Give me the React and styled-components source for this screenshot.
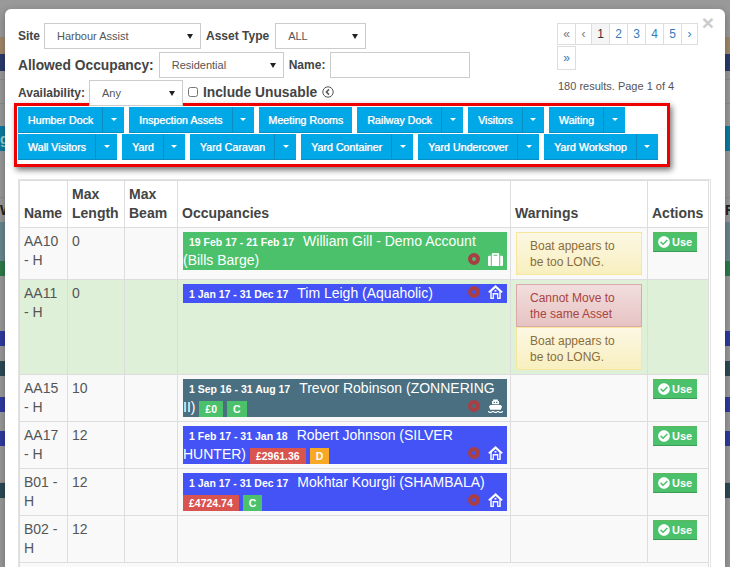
import React from 'react';
import styled, { createGlobalStyle } from 'styled-components';
import { FaCheckCircle, FaSuitcase } from 'react-icons/fa';

const arrow = "data:image/svg+xml,%3Csvg xmlns='http://www.w3.org/2000/svg' width='6' height='5'%3E%3Cpath d='M0 0h6L3 5z' fill='%23222'/%3E%3C/svg%3E";

const GlobalStyle = createGlobalStyle`
  html, body {
    margin: 0;
    height: 567px;
    overflow: hidden;
    background: #999;
    font-family: "Liberation Sans", Arial, sans-serif;
    font-size: 14px;
    color: #555;
  }
`;

const backdropStrips = [
  { h: 37, c: 'transparent' },
  { h: 17, c: '#a0876a' },
  { h: 17, c: '#2a3a6b' },
  { h: 9, c: 'transparent', line: true },
  { h: 24, c: 'transparent', line: true },
  { h: 22, c: 'transparent' },
  { h: 25, c: '#0b7ba0', left: 'g' },
  { h: 47, c: 'transparent', line: true },
  { h: 24, c: 'transparent', left: 'W', right: 'Fr', dark: true },
  { h: 39, c: '#6a878f' },
  { h: 15, c: '#2d7a4a' },
  { h: 55, c: 'transparent' },
  { h: 15, c: '#2f3a9e' },
  { h: 15, c: 'transparent' },
  { h: 15, c: '#2c4a55' },
  { h: 21, c: 'transparent' },
  { h: 15, c: '#2f3a9e' },
  { h: 19, c: 'transparent' },
  { h: 15, c: '#2f3a9e' },
  { h: 37, c: 'transparent', line: true },
  { h: 15, c: '#2c4a55' },
];

const menus = [
  ['Humber Dock', true], ['Inspection Assets', true], ['Meeting Rooms', false], ['Railway Dock', true], ['Visitors', true], ['Waiting', true],
  ['Wall Visitors', true], ['Yard', true], ['Yard Caravan', true], ['Yard Container', true], ['Yard Undercover', true], ['Yard Workshop', true],
];

function HomeIcon() {
  return (
    <svg width="16" height="16" viewBox="0 0 16 16">
      <path d="M8 .6L15.8 7.8 14.6 9 13.6 8.1V15.4H9.7V10.6H6.3V15.4H2.4V8.1L1.4 9 .2 7.8z" fill="#fff" />
      <path d="M8 3.6L12 7.3V14H11V9H5V14H4V7.3z" fill="var(--bar)" />
      <rect x="7" y="5.8" width="2" height="1.8" fill="#fff" />
    </svg>
  );
}

function ShipIcon() {
  return (
    <svg width="16" height="15" viewBox="0 0 16 15">
      <path d="M5.5 0h5v1.6h1.2V5H4.3V1.6h1.2z" fill="#fff" />
      <path d="M6 2.4h1.4v1.4H6zM8.6 2.4H10v1.4H8.6z" fill="var(--bar)" />
      <path d="M2.6 5.8h10.8L15 7.4 13.6 11H2.4L1 7.4z" fill="#fff" />
      <path d="M0 12.2c1.3 0 1.3.8 2.7.8s1.3-.8 2.6-.8 1.3.8 2.7.8 1.3-.8 2.7-.8 1.3.8 2.6.8 1.4-.8 2.7-.8v1.3c-1.3 0-1.3.8-2.7.8s-1.3-.8-2.6-.8-1.3.8-2.7.8-1.3-.8-2.7-.8-1.3.8-2.6.8-1.4-.8-2.7-.8z" fill="#fff" />
    </svg>
  );
}

function BackIcon() {
  return (
    <svg width="12" height="12" viewBox="0 0 12 12">
      <circle cx="6" cy="6" r="5.2" fill="none" stroke="#555" strokeWidth="1" />
      <path d="M7 3.4L4.4 6 7 8.6" fill="none" stroke="#555" strokeWidth="1.5" />
    </svg>
  );
}

function Occupancy({ color, dates, name, badges, icon }) {
  return (
    <Bar $color={color}>
      <Dates>{dates}</Dates>
      {name}{' '}
      {badges && badges.map(b => <Badge key={b.text} $color={b.color}>{b.text}</Badge>)}
      <BarIcons>
        <Ring />
        <IconBox>{icon}</IconBox>
      </BarIcons>
    </Bar>
  );
}

function UseButton() {
  return <UseBtn><FaCheckCircle size={12} />Use</UseBtn>;
}

const GREEN = '#4bc16b';
const BLUE = '#4353f5';
const TEAL = '#4a6f80';

export default function App() {
  return (
    <>
      <GlobalStyle />
      <Backdrop>
        {backdropStrips.map((s, i) => (
          <Strip key={i} $h={s.h} $c={s.c} $line={s.line} $dark={s.dark}>
            <span>{s.left}</span>
            <span>{s.right}</span>
          </Strip>
        ))}
      </Backdrop>
      <Modal>
        <Close>×</Close>
        <Top>
          <Filters>
            <FilterRow>
              <Label>Site</Label>
              <Select $w={157}><option>Harbour Assist</option></Select>
              <Label $after={1}>Asset Type</Label>
              <Select $w={91}><option>ALL</option></Select>
            </FilterRow>
            <FilterRow $top={3}>
              <BigLabel>Allowed Occupancy:</BigLabel>
              <Select $w={125}><option>Residential</option></Select>
              <Label $after={0}>Name:</Label>
              <NameInput />
            </FilterRow>
            <FilterRow $top={2}>
              <Label>Availability:</Label>
              <Select $w={94}><option>Any</option></Select>
              <IncludeGroup>
                <Check type="checkbox" />
                <BigLabel>Include Unusable</BigLabel>
                <BackIcon />
              </IncludeGroup>
            </FilterRow>
          </Filters>
          <PagerCol>
            <Pager>
              <PageItem $muted>«</PageItem>
              <PageItem $muted $narrow>‹</PageItem>
              <PageItem $active>1</PageItem>
              <PageItem>2</PageItem>
              <PageItem>3</PageItem>
              <PageItem>4</PageItem>
              <PageItem>5</PageItem>
              <PageItem $narrow>›</PageItem>
              <PageItem $tall>»</PageItem>
            </Pager>
            <Results>180 results. Page 1 of 4</Results>
          </PagerCol>
        </Top>

        <MenuBox>
          {menus.map(([label, caret]) => (
            <Group key={label}>
              <MenuBtn>{label}</MenuBtn>
              {caret && <CaretBtn><Caret /></CaretBtn>}
            </Group>
          ))}
        </MenuBox>

        <TableWrap>
          <Table>
            <colgroup>
              <col width="48" />
              <col width="57" />
              <col width="53" />
              <col width="333" />
              <col width="137" />
              <col width="61" />
            </colgroup>
            <thead>
              <tr>
                <Th>Name</Th>
                <Th>Max Length</Th>
                <Th>Max Beam</Th>
                <Th>Occupancies</Th>
                <Th>Warnings</Th>
                <Th>Actions</Th>
              </tr>
            </thead>
            <tbody>
              <Row>
                <Td>AA10 - H</Td>
                <Td>0</Td>
                <Td />
                <Td>
                  <Occupancy color={GREEN} dates="19 Feb 17 - 21 Feb 17" name="William Gill - Demo Account (Bills Barge)" icon={<FaSuitcase size={15} color="#fff" />} />
                </Td>
                <Td><Alert>Boat appears to be too LONG.</Alert></Td>
                <Td><UseButton /></Td>
              </Row>
              <Row $success>
                <Td>AA11 - H</Td>
                <Td>0</Td>
                <Td />
                <Td>
                  <Occupancy color={BLUE} dates="1 Jan 17 - 31 Dec 17" name="Tim Leigh (Aquaholic)" icon={<HomeIcon />} />
                </Td>
                <Td>
                  <Alert $danger>Cannot Move to the same Asset</Alert>
                  <Alert>Boat appears to be too LONG.</Alert>
                </Td>
                <Td />
              </Row>
              <Row>
                <Td>AA15 - H</Td>
                <Td>10</Td>
                <Td />
                <Td>
                  <Occupancy color={TEAL} dates="1 Sep 16 - 31 Aug 17" name="Trevor Robinson (ZONNERING II)" badges={[{ text: '£0', color: GREEN }, { text: 'C', color: GREEN }]} icon={<ShipIcon />} />
                </Td>
                <Td />
                <Td><UseButton /></Td>
              </Row>
              <Row>
                <Td>AA17 - H</Td>
                <Td>12</Td>
                <Td />
                <Td>
                  <Occupancy color={BLUE} dates="1 Feb 17 - 31 Jan 18" name="Robert Johnson (SILVER HUNTER)" badges={[{ text: '£2961.36', color: '#d9534f' }, { text: 'D', color: '#f9a825' }]} icon={<HomeIcon />} />
                </Td>
                <Td />
                <Td><UseButton /></Td>
              </Row>
              <Row>
                <Td>B01 - H</Td>
                <Td>12</Td>
                <Td />
                <Td>
                  <Occupancy color={BLUE} dates="1 Jan 17 - 31 Dec 17" name="Mokhtar Kourgli (SHAMBALA)" badges={[{ text: '£4724.74', color: '#d9534f' }, { text: 'C', color: GREEN }]} icon={<HomeIcon />} />
                </Td>
                <Td />
                <Td><UseButton /></Td>
              </Row>
              <Row>
                <Td>B02 - H</Td>
                <Td>12</Td>
                <Td />
                <Td />
                <Td />
                <Td><UseButton /></Td>
              </Row>
              <Row>
                <Td colSpan={6}><Spacer /></Td>
              </Row>
            </tbody>
          </Table>
        </TableWrap>
      </Modal>
    </>
  );
}

const Backdrop = styled.div`
  display: flex;
  flex-direction: column;
  height: 567px;
  overflow: hidden;
`;

const Strip = styled.div`
  flex: 0 0 ${p => p.$h}px;
  display: flex;
  align-items: center;
  justify-content: space-between;
  box-sizing: border-box;
  background: ${p => p.$c};
  border-bottom: ${p => (p.$line ? '1px solid #8d8d8d' : '0')};
  font-weight: bold;
  color: ${p => (p.$dark ? '#222' : '#9cc')};
  span:last-child {
    width: 5px;
    white-space: nowrap;
    overflow: hidden;
  }
`;

const Modal = styled.div`
  position: absolute;
  left: 5px;
  top: 9px;
  width: 720px;
  height: 558px;
  overflow: hidden;
  box-sizing: border-box;
  padding: 14px 14px 0 13px;
  background: #fff;
  border-radius: 6px 6px 0 0;
  box-shadow: 0 3px 9px rgba(0, 0, 0, .3);
`;

const Close = styled.div`
  position: absolute;
  right: 11px;
  top: 3px;
  font-size: 21px;
  line-height: 21px;
  font-weight: bold;
  color: #ccc;
`;

const Top = styled.div`
  display: flex;
  justify-content: space-between;
  height: 80px;
`;

const Filters = styled.div`
  display: flex;
  flex-direction: column;
`;

const FilterRow = styled.div`
  display: flex;
  align-items: center;
  gap: 5px;
  height: 26px;
  margin-top: ${p => p.$top || 0}px;
`;

const IncludeGroup = styled.div`
  display: flex;
  align-items: center;
  gap: 5px;
  margin-bottom: 2px;
`;

const Label = styled.label`
  margin-right: ${p => (p.$after === undefined ? -1 : p.$after)}px;
  font-size: 12px;
  font-weight: bold;
  color: #444;
`;

const BigLabel = styled.label`
  font-size: 13.8px;
  font-weight: bold;
  color: #444;
`;

const Select = styled.select`
  appearance: none;
  width: ${p => p.$w}px;
  height: 26px;
  box-sizing: border-box;
  padding: 0 12px;
  border: 1px solid #ccc;
  border-radius: 0;
  background: #fff url("${arrow}") no-repeat right 7px center;
  font-family: "Liberation Sans", Arial, sans-serif;
  font-size: 11px;
  color: #555;
`;

const NameInput = styled.input`
  width: 140px;
  height: 26px;
  box-sizing: border-box;
  border: 1px solid #ccc;
`;

const Check = styled.input`
  width: 10px;
  height: 10px;
  margin: 0;
`;

const PagerCol = styled.div`
  width: 142px;
  margin-right: 11px;
`;

const Pager = styled.div`
  display: flex;
  flex-wrap: wrap;
  width: 142px;
`;

const PageItem = styled.span`
  width: ${p => (p.$narrow ? 15 : 17)}px;
  height: ${p => (p.$tall ? 22 : 20)}px;
  margin-bottom: 1px;
  display: flex;
  align-items: center;
  justify-content: center;
  border: 1px solid #ddd;
  margin-left: -1px;
  font-size: 12px;
  color: ${p => (p.$active ? '#333' : p.$muted ? '#777' : '#337ab7')};
  background: ${p => (p.$active ? '#f5f5f5' : '#fff')};
`;

const Results = styled.div`
  margin-top: 9px;
  font-size: 11px;
  line-height: 13px;
  color: #555;
`;

const MenuBox = styled.div`
  display: flex;
  flex-wrap: wrap;
  align-content: flex-start;
  gap: 1px 5px;
  width: 656px;
  height: 64px;
  margin: 0 0 0 -4px;
  box-sizing: border-box;
  padding: 1px 0 0 1px;
  border: 3px solid #e00;
  box-shadow: 2px 3px 6px rgba(0, 0, 0, .55);
`;

const Group = styled.div`
  display: flex;
  height: 26px;
`;

const MenuBtn = styled.button`
  padding: 0 9px 0 10px;
  border: 0;
  border-bottom: 1px solid #0a8ec2;
  background: #00a8e8;
  color: #fff;
  font-family: "Liberation Sans", Arial, sans-serif;
  font-size: 10.7px;
  text-shadow: 0 0 1px #fff, 0 -1px 0 rgba(0, 0, 0, .2);
`;

const CaretBtn = styled.button`
  width: 22px;
  padding: 0;
  display: flex;
  align-items: center;
  justify-content: center;
  border: 0;
  border-left: 1px solid #0a8ec2;
  border-bottom: 1px solid #0a8ec2;
  background: #00a8e8;
`;

const Caret = styled.i`
  width: 0;
  height: 0;
  border-top: 3px solid #fff;
  border-left: 3px solid transparent;
  border-right: 3px solid transparent;
`;

const TableWrap = styled.div`
  margin-top: 12px;
  width: 693px;
  box-sizing: border-box;
  border: 1px solid #e3e3e3;
  border-bottom: 0;
  padding-right: 2px;
`;

const Table = styled.table`
  width: 690px;
  table-layout: fixed;
  border-collapse: collapse;
`;

const Th = styled.th`
  padding: 4px;
  border: 1px solid #ddd;
  vertical-align: bottom;
  text-align: left;
  font-size: 14px;
  line-height: 19px;
  color: #444;
`;

const Row = styled.tr`
  background: ${p => (p.$success ? '#dff0d8' : '#f9f9f9')};
`;

const Td = styled.td`
  padding: 4px;
  border: 1px solid #ddd;
  vertical-align: top;
  font-size: 14px;
  line-height: 19px;
  color: #555;
`;

const Spacer = styled.div`
  height: 38px;
`;

const Bar = styled.div`
  --bar: ${p => p.$color};
  margin: 0 -1px 0 1px;
  background: ${p => p.$color};
  color: #fff;
  font-size: 14px;
  line-height: 19px;
  overflow: hidden;
`;

const Dates = styled.span`
  padding: 0 9px 0 6px;
  font-size: 10.5px;
  line-height: 10px;
  font-weight: bold;
`;

const Badge = styled.span`
  display: inline-block;
  margin-right: 4px;
  padding: 0 6px;
  height: 16px;
  vertical-align: bottom;
  line-height: 16px;
  background: ${p => p.$color};
  font-size: 10.5px;
  font-weight: bold;
`;

const BarIcons = styled.span`
  float: right;
  display: flex;
  align-items: center;
  gap: 8px;
  height: 16px;
  padding-right: 4px;
`;

const Ring = styled.i`
  width: 12px;
  height: 12px;
  box-sizing: border-box;
  border: 4px solid #a83f45;
  border-radius: 50%;
`;

const IconBox = styled.span`
  display: flex;
  width: 15px;
  justify-content: center;
`;

const Alert = styled.div`
  padding: 5px 13px;
  box-sizing: border-box;
  height: 43px;
  margin: 0 1px 0 1px;
  border: 1px solid ${p => (p.$danger ? '#dca7a7' : '#f5e79e')};
  background: ${p => (p.$danger ? 'linear-gradient(#f2dede, #e7c3c3)' : 'linear-gradient(#fcf8e3, #f8efc0)')};
  color: ${p => (p.$danger ? '#a94442' : '#8a6d3b')};
  font-size: 12px;
  line-height: 16px;
`;

const UseBtn = styled.button`
  display: flex;
  align-items: center;
  gap: 2px;
  width: 44px;
  height: 20px;
  margin-left: 1px;
  padding: 0 0 0 5px;
  border: 0;
  border-top: 1px solid #5cb85c;
  border-bottom: 1px solid #3a9d55;
  background: ${GREEN};
  color: #fff;
  font-family: "Liberation Sans", Arial, sans-serif;
  font-size: 11px;
  font-weight: bold;
`;
